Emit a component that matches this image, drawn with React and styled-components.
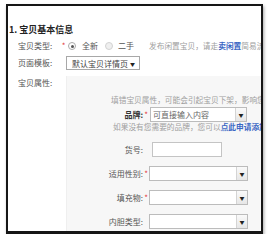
import React from "react";
import styled, { createGlobalStyle } from "styled-components";

const Global = createGlobalStyle`
  html, body { margin: 0; padding: 0; background: #fff; }
  body { font-family: "Noto Sans CJK SC", "Noto Sans", sans-serif; }
`;

const Frame = styled.div`
  position: relative;
  margin: 4px 0 0 6px;
  width: 257px;
  height: 230px;
  box-sizing: border-box;
  border: 2px solid #161616;
  border-bottom-width: 3px;
  box-shadow: 1px 2px 3px rgba(0, 0, 0, 0.35);
  background: #fff;
  overflow: hidden;
  display: flex;
  flex-direction: column;
`;

const Title = styled.div`
  margin-top: 17px;
  padding-left: 1px;
  height: 14px;
  line-height: 14px;
  font-size: 9px;
  font-weight: 700;
  color: #222;
  white-space: nowrap;
`;

const Row = styled.div`
  display: grid;
  grid-template-columns: 43px 5px 1fr;
  align-items: ${(p) => (p.$top ? "start" : "center")};
  padding-left: 10px;
  margin-top: ${(p) => p.$mt || 0}px;
  height: ${(p) => (p.$grow ? "auto" : "14px")};
  flex: ${(p) => (p.$grow ? 1 : "none")};
`;

const Label = styled.span`
  font-size: 8px;
  line-height: 10px;
  color: #555;
  white-space: nowrap;
  padding-top: ${(p) => p.$pt || 0}px;
`;

const Star = styled.span`
  font-size: 8px;
  line-height: 10px;
  color: #e3393c;
  text-align: ${(p) => p.$align || "left"};
`;

const Options = styled.div`
  display: flex;
  align-items: center;
  margin-left: 2px;
  white-space: nowrap;
`;

const Radio = styled.span`
  width: 6px;
  height: 6px;
  border-radius: 50%;
  border: 1px solid ${(p) => (p.$on ? "#aaa" : "#d2d2d2")};
  background: ${(p) => (p.$on ? "#fff" : "#efefef")};
  display: flex;
  align-items: center;
  justify-content: center;
  flex: none;
  margin-left: ${(p) => p.$ml || 0}px;
  &::after {
    content: "";
    width: 3px;
    height: 3px;
    border-radius: 50%;
    background: ${(p) => (p.$on ? "#555" : "transparent")};
  }
`;

const OptText = styled.span`
  font-size: 8px;
  line-height: 10px;
  color: #555;
  margin-left: ${(p) => p.$ml || 0}px;
`;

const Note = styled.span`
  font-size: 7.7px;
  line-height: 10px;
  color: #a0a0a0;
  margin-left: ${(p) => p.$ml || 0}px;
  padding-left: ${(p) => p.$pl || 0}px;
  white-space: nowrap;
  display: block;
  margin-top: ${(p) => p.$mt || 0}px;
`;

const Link = styled.span`
  color: #3a66c4;
  font-weight: ${(p) => (p.$bold ? 700 : 400)};
`;

const TemplateSelect = styled.div`
  width: 74px;
  height: 14px;
  box-sizing: border-box;
  border: 1px solid #a8a8a8;
  display: flex;
  align-items: center;
  justify-content: space-between;
  padding: 0 4px 0 5px;
  font-size: 8px;
  color: #444;
  white-space: nowrap;
`;

const Caret = styled.span`
  font-size: 5px;
  color: #222;
`;

const Panel = styled.div`
  align-self: stretch;
  background: #f7f7f7;
  border-left: 1px solid #efefef;
  padding-top: 19px;
  display: flex;
  flex-direction: column;
`;

const Field = styled.div`
  display: grid;
  grid-template-columns: 76px 6px 1fr;
  align-items: center;
  height: 15px;
  margin-top: ${(p) => p.$mt || 0}px;
`;

const FieldLabel = styled.span`
  text-align: right;
  font-size: 8px;
  line-height: 10px;
  white-space: nowrap;
  color: ${(p) => (p.$strong ? "#333" : "#555")};
  font-weight: ${(p) => (p.$strong ? 700 : 400)};
`;

const Combo = styled.div`
  width: ${(p) => p.$w}px;
  height: 15px;
  box-sizing: border-box;
  margin-left: ${(p) => p.$ml || 0}px;
  border: 1px solid #bcbcbc;
  background: #fff;
  display: flex;
  align-items: stretch;
`;

const ComboText = styled.span`
  flex: 1;
  font-size: 8px;
  line-height: 13px;
  color: #666;
  padding-left: 2px;
  white-space: nowrap;
`;

const DropBtn = styled.span`
  width: 10px;
  border-left: 1px solid #d4d4d4;
  background: linear-gradient(#fafafa, #e6e6e6);
  display: flex;
  align-items: center;
  justify-content: center;
`;

const TextInput = styled.div`
  width: ${(p) => p.$w}px;
  height: 15px;
  box-sizing: border-box;
  margin-left: ${(p) => p.$ml || 0}px;
  border: 1px solid #c4c4c4;
  background: #fff;
`;

const fields = [
  { label: "适用性别:", star: true, mt: 9 },
  { label: "填充物:", star: true, mt: 9 },
  { label: "内胆类型:", star: false, mt: 9 },
];

export default function App() {
  return (
    <>
      <Global />
      <Frame>
        <Title>1. 宝贝基本信息</Title>
        <Row $mt={2}>
          <Label>宝贝类型:</Label>
          <Star $align="center">*</Star>
          <Options>
            <Radio $on />
            <OptText $ml={6}>全新</OptText>
            <Radio $ml={7} />
            <OptText $ml={5}>二手</OptText>
            <Note $ml={15}>
              发布闲置宝贝，请走<Link $bold>卖闲置</Link>简易流程
            </Note>
          </Options>
        </Row>
        <Row $mt={3}>
          <Label>页面模板:</Label>
          <span />
          <TemplateSelect>
            默认宝贝详情页
            <Caret>▼</Caret>
          </TemplateSelect>
        </Row>
        <Row $mt={6} $grow $top>
          <Label $pt={2}>宝贝属性:</Label>
          <span />
          <Panel>
            <Note $pl={44}>填错宝贝属性，可能会引起宝贝下架，影响您的正常销售</Note>
            <Field $mt={2}>
              <FieldLabel $strong>品牌:</FieldLabel>
              <Star $align="center">*</Star>
              <Combo $w={97} $ml={1}>
                <ComboText>可直接输入内容</ComboText>
                <DropBtn>
                  <Caret>▼</Caret>
                </DropBtn>
              </Combo>
            </Field>
            <Note $pl={46}>
              如果没有您需要的品牌，您可以<Link $bold>点此申请添加</Link>
            </Note>
            <Field $mt={10}>
              <FieldLabel>货号:</FieldLabel>
              <span />
              <TextInput $w={70} $ml={3} />
            </Field>
            {fields.map((f) => (
              <Field key={f.label} $mt={f.mt}>
                <FieldLabel>{f.label}</FieldLabel>
                {f.star ? <Star $align="center">*</Star> : <span />}
                <Combo $w={99}>
                  <ComboText />
                  <DropBtn>
                    <Caret>▼</Caret>
                  </DropBtn>
                </Combo>
              </Field>
            ))}
          </Panel>
        </Row>
      </Frame>
    </>
  );
}
